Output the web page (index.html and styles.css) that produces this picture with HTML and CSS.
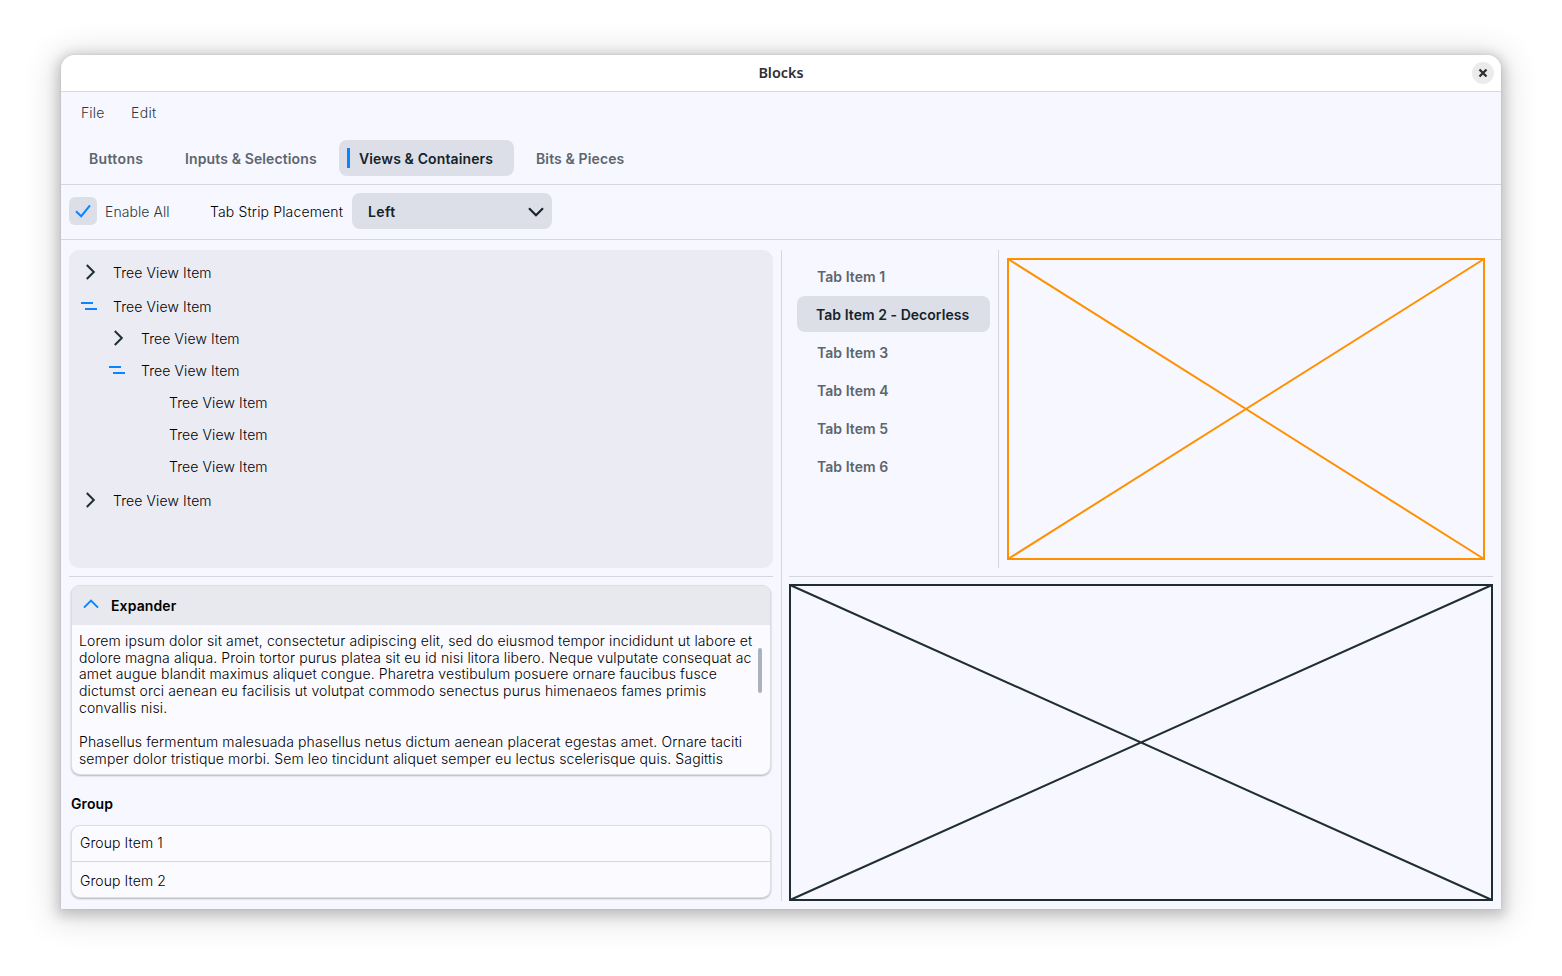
FILE: index.html
```html
<!DOCTYPE html>
<html lang="en">
<head>
<meta charset="utf-8">
<title>Blocks</title>
<link rel="stylesheet" href="styles.css">
</head>
<body>
<main class="window">
  <header class="titlebar">
    <h1 class="title">Blocks</h1>
    <button class="close" aria-label="Close"><svg width="22" height="22" viewBox="0 0 22 22"><path d="M7.5 7.5l7 7M14.5 7.5l-7 7"/></svg></button>
  </header>
  <nav class="menu"><span class="menu-file">File</span><span class="menu-edit">Edit</span></nav>
  <nav class="tabs">
    <a class="tab tab-buttons">Buttons</a>
    <a class="tab tab-inputs">Inputs &amp; Selections</a>
    <a class="tab tab-views selected">Views &amp; Containers</a>
    <a class="tab">Bits &amp; Pieces</a>
  </nav>
  <section class="toolbar">
    <span class="check"><svg width="28" height="28" viewBox="0 0 28 28"><path d="M7 14.2l5.2 5L21 8.3"/></svg></span>
    <span class="enable">Enable All</span>
    <span class="label">Tab Strip Placement</span>
    <span class="select"><span>Left</span><svg width="16" height="10" viewBox="0 0 16 10"><path d="M1 1.3l7 7 7-7"/></svg></span>
  </section>
  <section class="content">
    <div class="column left">
      <ul class="tree">
        <li class="node top"><svg width="28" height="20" viewBox="0 0 28 20"><path d="M9.8 4l7 7-7 7"/></svg>Tree View Item</li>
        <li class="node top"><svg class="open" width="28" height="20" viewBox="0 0 28 20"><path d="M4 8h12M8 14h12"/></svg>Tree View Item</li>
        <li class="node second"><svg width="28" height="20" viewBox="0 0 28 20"><path d="M9.8 4l7 7-7 7"/></svg>Tree View Item</li>
        <li class="node second"><svg class="open" width="28" height="20" viewBox="0 0 28 20"><path d="M4 8h12M8 14h12"/></svg>Tree View Item</li>
        <li class="node third">Tree View Item</li>
        <li class="node third">Tree View Item</li>
        <li class="node third">Tree View Item</li>
        <li class="node top"><svg width="28" height="20" viewBox="0 0 28 20"><path d="M9.8 4l7 7-7 7"/></svg>Tree View Item</li>
      </ul>
      <div class="rule"></div>
      <article class="card expander">
        <h2 class="expander-head"><svg width="16" height="10" viewBox="0 0 16 10"><path d="M1 8.6l7-7 7 7"/></svg>Expander</h2>
        <div class="expander-body">
          <div class="prose">
            <p>Lorem ipsum dolor sit amet, consectetur adipiscing elit, sed do eiusmod tempor incididunt ut labore et<br>dolore magna aliqua. Proin tortor purus platea sit eu id nisi litora libero. Neque vulputate consequat ac<br>amet augue blandit maximus aliquet congue. Pharetra vestibulum posuere ornare faucibus fusce<br>dictumst orci aenean eu facilisis ut volutpat commodo senectus purus himenaeos fames primis<br>convallis nisi.</p>
            <p>Phasellus fermentum malesuada phasellus netus dictum aenean placerat egestas amet. Ornare taciti<br>semper dolor tristique morbi. Sem leo tincidunt aliquet semper eu lectus scelerisque quis. Sagittis</p>
          </div>
          <div class="thumb"></div>
        </div>
      </article>
      <h2 class="group-title">Group</h2>
      <ul class="card group"><li>Group Item 1</li><li>Group Item 2</li></ul>
    </div>
    <div class="divider"></div>
    <div class="column right">
      <div class="upper">
        <ul class="side-tabs">
          <li>Tab Item 1</li>
          <li class="active">Tab Item 2 - Decorless</li>
          <li>Tab Item 3</li>
          <li>Tab Item 4</li>
          <li>Tab Item 5</li>
          <li>Tab Item 6</li>
        </ul>
        <div class="side-line"></div>
        <svg class="orange" width="478" height="302" viewBox="0 0 478 302"><path d="M1 1h476v300H1zL477 301M477 1L1 301"/></svg>
      </div>
      <div class="rule"></div>
      <svg class="dark" width="704" height="317" viewBox="0 0 704 317"><path d="M1 1h702v315H1zL703 316M703 1L1 316"/></svg>
    </div>
  </section>
</main>
</body>
</html>
```
FILE: styles.css
```css
* { box-sizing: border-box; margin: 0; padding: 0; }
body {
  width: 1562px; height: 976px; padding: 55px 61px 0; background: #fff; overflow: hidden;
  font: 300 14px/18px Inter, sans-serif; letter-spacing: .12px; color: #000; white-space: nowrap;
}
ul { list-style: none; }
svg { display: block; flex: none; }
svg path { fill: none; stroke: #1f2e35; stroke-width: 2; }
.window {
  width: 1440px; height: 854px; background: #f7f7ff; border-radius: 14px 14px 0 0;
  box-shadow: 0 0 2px rgba(0,0,0,.12), 0 3px 12px 4px rgba(0,0,0,.17), 0 4px 32px 8px rgba(0,0,0,.12);
}
.titlebar {
  display: grid; grid-template-columns: 1fr auto 1fr; align-items: center; height: 37px;
  background: #fff; border-bottom: 1px solid #dadade; border-radius: 14px 14px 0 0;
}
.title { grid-column: 2; font: 600 14.4px/20px "Noto Sans", sans-serif; letter-spacing: 0; color: #2f2f33; }
.close {
  justify-self: end; width: 22px; height: 22px; margin-right: 7px;
  border: 0; border-radius: 50%; background: #ebebeb;
}
.close path { stroke: #2f2f33; stroke-width: 2.3; }
.menu { display: flex; padding: 12px 20px; height: 48px; color: #2c3840; }
.menu-file { width: 50px; }
.menu-edit { letter-spacing: .35px; }
.tabs { display: flex; gap: 2px; height: 45px; padding: 0 8px 8px; border-bottom: 1px solid #d5d6e0; }
.tab { display: flex; align-items: center; padding: 2px 20px 0; border-radius: 8px; font-weight: 600; color: #5c666d; }
.tab-buttons { width: 94px; letter-spacing: .35px; }
.tab-inputs { width: 172px; }
.tab-views { width: 175px; }
.tab.selected { padding: 2px 8px 0; background: #dddfe8; color: #14232a; }
.selected::before { content: ""; width: 3px; height: 20px; margin: -2px 9px 0 0; background: #0a84ff; }
.toolbar { display: flex; align-items: center; height: 55px; padding: 0 8px 2px; border-bottom: 1px solid #d5d6e0; }
.check { width: 28px; height: 28px; border-radius: 6px; background: #dddfe8; }
.check path { stroke: #0a84ff; }
.enable { width: 105px; margin-left: 8px; padding-top: 2px; letter-spacing: .06px; color: #2c3840; }
.label { width: 142px; padding-top: 2px; letter-spacing: .15px; }
.select {
  display: flex; align-items: center; justify-content: space-between; width: 200px; height: 36px;
  padding: 2px 8px 0 16px; border-radius: 8px; background: #dddfe8; font-weight: 600; letter-spacing: .35px; color: #14232a;
}
.select svg { margin-top: -1px; }
.select path { stroke: #14232a; stroke-width: 2.1; }
.content { display: flex; padding: 10px 8px; height: 669px; }
.column { width: 704px; }
.divider { width: 1px; height: 651px; margin: 0 7px 0 8px; background: #d5d6e0; }
.tree { height: 318px; padding: 5px 12px; border-radius: 10px; background: #ebebf4; letter-spacing: .1px; }
.node { display: flex; align-items: center; height: 32px; }
.node svg { margin: -4px 8px 0 -4px; }
.node.top { height: 34px; padding-top: 2px; }
.second { padding-left: 28px; }
.third { padding-left: 88px; }
.node .open path, .expander-head path { stroke: #0a84ff; }
.rule { height: 1px; margin: 8px 0 7px; background: #d5d6e0; }
.card {
  width: 700px; margin-left: 2px; border: 1px solid #dddde4; border-radius: 9px; background: #fbfbff;
  box-shadow: 0 1px 2px rgba(0,0,0,.28); overflow: hidden;
}
.expander { height: 190px; margin-top: 8px; }
.expander-head {
  display: flex; align-items: center; gap: 12px; height: 39px; padding: 1px 11px 0;
  background: #e8e9ee; font-size: 14px; font-weight: 600; line-height: 18px;
}
.expander-head svg { margin-top: -4px; }
.expander-body { display: flex; justify-content: space-between; padding: 7.7px 8px 0 7px; line-height: 16.85px; }
.prose p + p { margin-top: 16.85px; }
.thumb { flex: none; width: 4px; height: 45px; margin-top: 15.3px; border-radius: 2px; background: #aab2bd; }
.group-title { margin: 20px 0 12px 2px; font-size: 14px; font-weight: 600; line-height: 18px; }
.group { height: 73px; letter-spacing: .08px; }
.group li { height: 36px; padding: 8px; }
.group li:first-child { height: 35px; }
.group li + li { padding-top: 10px; border-top: 1px solid #d5d6e0; }
.upper { display: flex; height: 318px; }
.side-tabs { width: 201px; margin: 8px 0 0 8px; font-weight: 600; letter-spacing: .04px; color: #5c666d; }
.side-tabs li { height: 36px; width: 193px; margin-bottom: 2px; padding: 10px 20px 8px; border-radius: 8px; }
.side-tabs .active { padding-left: 19px; background: #dddfe8; color: #14232a; }
.side-line { width: 1px; background: #d5d6e0; }
.orange { margin: 8px 0 0 8px; }
.orange path { stroke: #ff9000; }
```
